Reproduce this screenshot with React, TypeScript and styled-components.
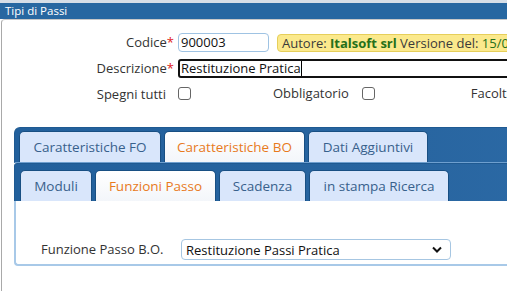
import styled, { createGlobalStyle } from "styled-components";

const GlobalStyle = createGlobalStyle`
  html, body {
    margin: 0;
    padding: 0;
    background: #ffffff;
    overflow: hidden;
  }
  body {
    font-family: "Open Sans", "Noto Sans", sans-serif;
    font-size: 13px;
    color: #333;
  }
`;

const Page = styled.div`
  width: 507px;
  height: 291px;
  overflow: hidden;
  background: #fff;
`;

const TopStrip = styled.div`
  height: 3px;
  background: #d6dee7;
`;

const TitleBar = styled.div`
  height: 16px;
  background: #2767a1;
  color: #fff;
  font-size: 11.5px;
  line-height: 16px;
  padding-left: 5px;
`;

const Window = styled.div`
  width: 620px;
  height: 272px;
  margin-left: 1px;
  border-left: 1px solid #a9a9a9;
  border-top: 1px solid #c8c8c8;
  border-top-left-radius: 4px;
  box-sizing: border-box;
  padding-top: 13px;
`;

const Form = styled.div`
  display: grid;
  grid-template-columns: 176px auto;
  row-gap: 7px;
`;

const Label = styled.div<{ $pad?: number }>`
  text-align: right;
  padding-right: ${(p) => p.$pad ?? 4}px;
  line-height: 19px;
  white-space: nowrap;
`;

const Req = styled.span`
  color: #e02020;
`;

const Line = styled.div`
  display: flex;
  align-items: center;
  gap: 8px;
`;

const TextInput = styled.div<{ $w: number; $focus?: boolean }>`
  width: ${(p) => p.$w}px;
  height: 19px;
  box-sizing: border-box;
  border: ${(p) => (p.$focus ? "2px solid #111" : "1px solid #9fc3e3")};
  border-radius: ${(p) => (p.$focus ? 3 : 4)}px;
  padding-left: ${(p) => (p.$focus ? 1 : 2)}px;
  line-height: ${(p) => (p.$focus ? 15 : 17)}px;
  color: #111;
  white-space: nowrap;
  display: flex;
  align-items: center;
`;

const Caret = styled.span`
  display: inline-block;
  width: 1px;
  height: 15px;
  background: #000;
`;

const Badge = styled.div`
  height: 18px;
  box-sizing: border-box;
  border: 1px solid #e6cf5a;
  border-radius: 4px;
  background: #fbe98c;
  padding: 0 4px;
  line-height: 16px;
  color: #3a3a3a;
  white-space: nowrap;
`;

const Green = styled.span<{ $bold?: boolean }>`
  color: #26701a;
  font-weight: ${(p) => (p.$bold ? 700 : 400)};
`;

const CheckRow = styled.div`
  display: flex;
  align-items: center;
  height: 16px;
`;

const Check = styled.span`
  width: 11px;
  height: 11px;
  border: 1px solid #666;
  border-radius: 3px;
  display: inline-block;
  flex: none;
`;

const CheckLabel = styled.span<{ $ml: number }>`
  margin-left: ${(p) => p.$ml}px;
  margin-right: 13px;
  white-space: nowrap;
`;

const Panel = styled.div`
  margin: 23px 0 0 12px;
  width: 560px;
`;

const TabBar = styled.div<{ $inner?: boolean }>`
  display: flex;
  gap: 3px;
  height: ${(p) => (p.$inner ? 38 : 36)}px;
  padding: ${(p) => (p.$inner ? "5px 0 0 5px" : "4px 0 0 4px")};
  box-sizing: border-box;
  align-items: flex-end;
  background: linear-gradient(90deg, #22609c 0%, #2865a0 70%, #2c6aa6 100%);
  border: 1px solid #1f5a92;
  border-top-left-radius: ${(p) => (p.$inner ? 3 : 6)}px;
  border-bottom: ${(p) => (p.$inner ? "none" : "1px solid #6e9fcf")};
`;

const Tab = styled.div<{ $active?: boolean; $w: number }>`
  width: ${(p) => p.$w}px;
  height: 31px;
  flex: none;
  box-sizing: border-box;
  border: 1px solid #184f83;
  border-bottom: none;
  border-radius: 5px 5px 0 0;
  background: ${(p) =>
    p.$active ? "linear-gradient(#ffffff, #f3f6fa)" : "#d9e6fb"};
  color: ${(p) => (p.$active ? "#e87a1c" : "#38618c")};
  display: flex;
  align-items: center;
  justify-content: center;
  font-size: 13.5px;
  white-space: nowrap;
`;

const Content = styled.div`
  height: 65px;
  border-left: 2px solid #a8c9e8;
  border-bottom: 2px solid #a8c9e8;
  border-bottom-left-radius: 4px;
  display: flex;
  align-items: flex-end;
  padding: 0 0 3px 25px;
  box-sizing: border-box;
`;

const FieldLabel = styled.div`
  width: 140px;
  color: #333;
  line-height: 20px;
  padding-bottom: 2px;
  white-space: nowrap;
`;

const Select = styled.div`
  width: 270px;
  height: 21px;
  box-sizing: border-box;
  border: 1px solid #a6c6e2;
  border-radius: 4px;
  display: flex;
  align-items: center;
  justify-content: space-between;
  padding: 0 8px 0 4px;
  color: #111;
  margin-bottom: 1px;
`;

export default function App() {
  return (
    <Page>
      <GlobalStyle />
      <TopStrip />
      <TitleBar>Tipi di Passi</TitleBar>
      <Window>
        <Form>
          <Label>
            Codice<Req>*</Req>
          </Label>
          <Line>
            <TextInput $w={91}>900003</TextInput>
            <Badge>
              Autore: <Green $bold>Italsoft srl</Green> Versione del:{" "}
              <Green>15/05/2023</Green>
            </Badge>
          </Line>
          <Label>
            Descrizione<Req>*</Req>
          </Label>
          <Line>
            <TextInput $w={360} $focus>
              Restituzione Pratica
              <Caret />
            </TextInput>
          </Line>
          <Label $pad={12}>Spegni tutti</Label>
          <CheckRow>
            <Check />
            <CheckLabel $ml={82}>Obbligatorio</CheckLabel>
            <Check />
            <CheckLabel $ml={96}>Facoltativo</CheckLabel>
          </CheckRow>
        </Form>
        <Panel>
          <TabBar>
            <Tab $w={142}>Caratteristiche FO</Tab>
            <Tab $w={141} $active>
              Caratteristiche BO
            </Tab>
            <Tab $w={120}>Dati Aggiuntivi</Tab>
          </TabBar>
          <TabBar $inner>
            <Tab $w={72}>Moduli</Tab>
            <Tab $w={121} $active>
              Funzioni Passo
            </Tab>
            <Tab $w={87}>Scadenza</Tab>
            <Tab $w={140}>in stampa Ricerca</Tab>
          </TabBar>
          <Content>
            <FieldLabel>Funzione Passo B.O.</FieldLabel>
            <Select>
              Restituzione Passi Pratica
              <svg width="10" height="7" viewBox="0 0 10 7">
                <path
                  d="M1 1.5 L5 5.5 L9 1.5"
                  fill="none"
                  stroke="#111"
                  strokeWidth="2"
                />
              </svg>
            </Select>
          </Content>
        </Panel>
      </Window>
    </Page>
  );
}
